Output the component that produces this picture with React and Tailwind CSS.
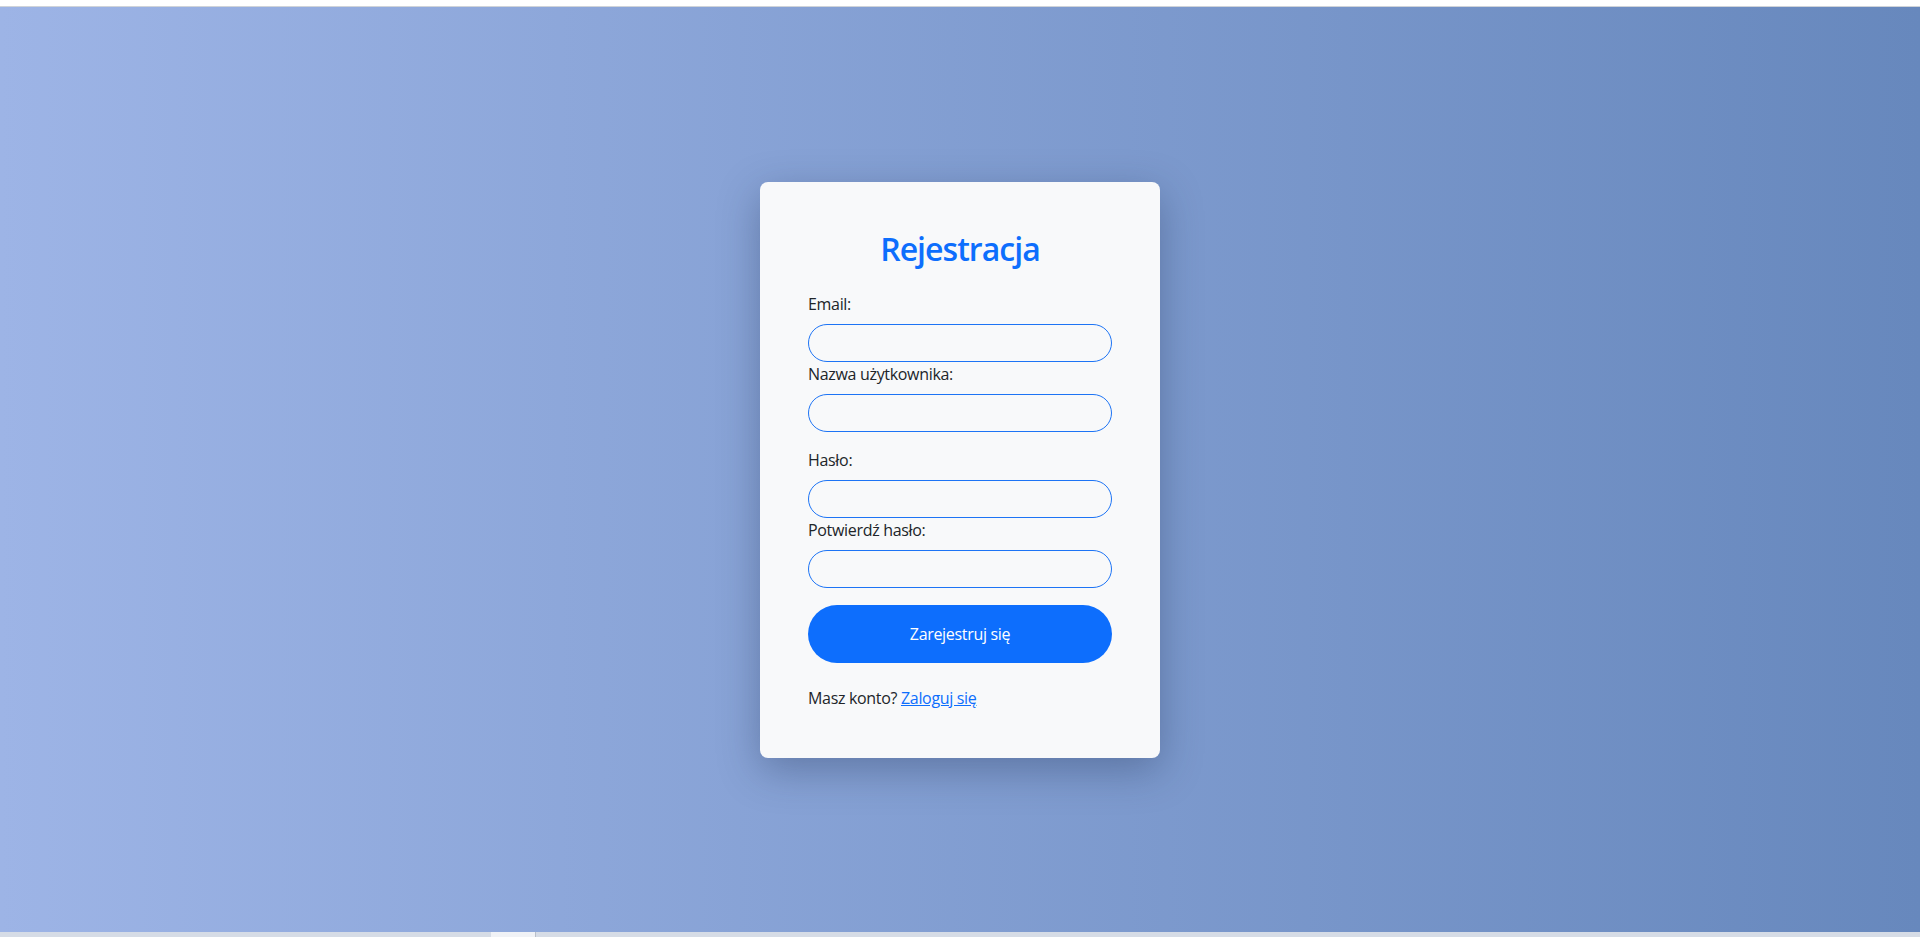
export default function App() {
  const font = { fontFamily: '"Open Sans", "Noto Sans", "Liberation Sans", sans-serif' };
  return (
    <div className="w-full h-[937px] flex flex-col overflow-hidden" style={font}>
      <div className="h-[6px] bg-white" />
      <div className="h-px bg-[#cfd3d9]" />
      <div className="flex-1 flex items-center justify-center bg-gradient-to-r from-[#9db4e6] to-[#6788bd]">
        <div className="w-[400px] bg-[#f8f9fa] rounded-lg px-12 pt-12 pb-12 shadow-[0_12px_40px_rgba(30,45,80,0.35)]">
          <h2 className="text-[32px] leading-[38px] font-semibold text-[#0d6efd] text-center tracking-[-0.03em] mb-6">
            Rejestracja
          </h2>
          <form onSubmit={(e) => e.preventDefault()}>
            <label className="block text-[16px] leading-6 text-[#212529] mb-2 tracking-[-0.02em]">Email:</label>
            <input type="email" className="block w-full h-[38px] rounded-full border border-[#1d74f5] bg-[#f8f9fa] px-3 outline-none" />
            <label className="block text-[16px] leading-6 text-[#212529] mb-2 tracking-[-0.02em]">Nazwa użytkownika:</label>
            <input type="text" className="block w-full h-[38px] rounded-full border border-[#1d74f5] bg-[#f8f9fa] px-3 outline-none mb-4" />
            <label className="block text-[16px] leading-6 text-[#212529] mb-2 tracking-[-0.02em]">Hasło:</label>
            <input type="password" className="block w-full h-[38px] rounded-full border border-[#1d74f5] bg-[#f8f9fa] px-3 outline-none" />
            <label className="block text-[16px] leading-6 text-[#212529] mb-2 tracking-[-0.02em]">Potwierdź hasło:</label>
            <input type="password" className="block w-full h-[38px] rounded-full border border-[#1d74f5] bg-[#f8f9fa] px-3 outline-none" />
            <button type="submit" className="mt-[17px] w-full h-[58px] rounded-full bg-[#0d6efd] text-white text-[16px] tracking-[-0.02em]">
              Zarejestruj się
            </button>
          </form>
          <p className="mt-[23px] text-[16px] leading-6 text-[#212529] tracking-[-0.02em]">
            Masz konto? <a href="#" className="text-[#0d6efd] underline">Zaloguj się</a>
          </p>
        </div>
      </div>
      <div className="h-[5px] flex bg-[#d6dce6]">
        <div className="w-[491px]" />
        <div className="w-[44px] bg-[#f0f2f6]" />
        <div className="w-px bg-[#b9bfc9]" />
        <div className="flex-1" />
      </div>
    </div>
  );
}
